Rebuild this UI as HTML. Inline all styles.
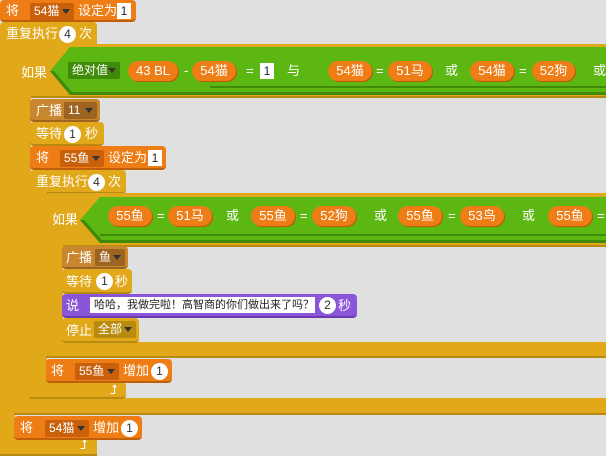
<!DOCTYPE html>
<html><head><meta charset="utf-8"><style>
body{margin:0;width:606px;height:456px;overflow:hidden;background:#e0e0e0;font-family:"Liberation Sans","Noto Sans CJK SC",sans-serif;font-size:13px;color:#fff;position:relative}
div,span{position:absolute;box-sizing:border-box}
.g{background:#e1a81a;border-bottom:2px solid #b88a10}
.o{background:#ee7d16;border-bottom:2px solid #c05f0a}
.b{background:#c8862e;border-bottom:2px solid #9c6420}
.p{background:#8a55d7;border-bottom:2px solid #6a3cb0}
.t{white-space:nowrap;line-height:14px}
.pill{background:#ee7d16;border-radius:11px;height:20px;line-height:20px;text-align:center;box-shadow:1px 1px 0 #b85c08;font-size:13px}
.num{background:#fff;color:#333;border-radius:9px;height:17px;width:17px;line-height:17px;text-align:center;font-size:12px}
.box{background:#fff;color:#222;height:16px;line-height:16px;text-align:center;font-size:12px}
.dd{border-radius:2px;height:17px;line-height:17px;padding-left:4px;font-size:12px}
.dd:after{content:"";position:absolute;right:4px;top:6px;border:4px solid transparent;border-top:5px solid #333;border-bottom:0}
</style></head><body>

<div class="g" style="left:0;top:22px;width:97px;height:24px;border-radius:4px"></div>
<div class="t" style="left:6px;top:27px">重复执行</div><div class="num" style="left:59px;top:26px">4</div><div class="t" style="left:79px;top:27px">次</div>
<div class="g" style="left:0;top:40px;width:15px;height:416px;border-bottom:0"></div>
<div class="g" style="left:0;top:438px;width:97px;height:18px;border-radius:0 4px 0 0"></div>
<div class="t" style="left:80px;top:438px;font-size:13px">⮥</div>

<div class="o" style="left:0;top:0;width:136px;height:22px;border-radius:4px"></div>
<div class="t" style="left:6px;top:4px">将</div>
<div class="dd" style="left:30px;top:3px;width:44px;background:#c8600c">54猫</div>
<div class="t" style="left:78px;top:4px">设定为</div><div class="box" style="left:117px;top:3px;width:14px">1</div>

<div class="g" style="left:14px;top:44px;width:592px;height:54px;border-radius:4px 0 0 0"></div>
<div class="g" style="left:14px;top:96px;width:17px;height:306px;border-bottom:0"></div>
<div class="g" style="left:14px;top:398px;width:592px;height:17px"></div>
<div class="t" style="left:21px;top:66px">如果</div>
<svg style="position:absolute;left:50px;top:47px" width="556" height="50"><polygon points="0,24 20,0 556,0 556,48 20,48" fill="#5cb712"/><polygon points="0,24 20,48 556,48 556,45 22,45 4,24" fill="#3f8a08"/><line x1="160" y1="40" x2="556" y2="40" stroke="#3f8a08" stroke-width="2"/></svg>
<div class="dd" style="left:68px;top:62px;width:52px;background:#3f8a08">绝对值</div>
<div class="pill" style="left:128px;top:61px;width:50px">43 BL</div>
<div class="t" style="left:184px;top:64px">-</div>
<div class="pill" style="left:192px;top:61px;width:44px">54猫</div>
<div class="t" style="left:246px;top:64px">=</div><div class="box" style="left:260px;top:63px;width:14px">1</div>
<div class="t" style="left:287px;top:64px">与</div>
<div class="pill" style="left:328px;top:61px;width:44px">54猫</div><div class="t" style="left:376px;top:64px">=</div>
<div class="pill" style="left:388px;top:61px;width:44px">51马</div><div class="t" style="left:445px;top:64px">或</div>
<div class="pill" style="left:470px;top:61px;width:44px">54猫</div><div class="t" style="left:519px;top:64px">=</div>
<div class="pill" style="left:532px;top:61px;width:43px">52狗</div><div class="t" style="left:593px;top:64px">或</div>

<div class="b" style="left:30px;top:99px;width:70px;height:23px;border-radius:4px"></div>
<div class="t" style="left:36px;top:104px">广播</div><div class="dd" style="left:64px;top:102px;width:33px;background:#9c6420">11</div>
<div class="g" style="left:30px;top:122px;width:74px;height:24px;border-radius:4px"></div>
<div class="t" style="left:36px;top:127px">等待</div><div class="num" style="left:64px;top:126px">1</div><div class="t" style="left:85px;top:127px">秒</div>
<div class="o" style="left:30px;top:146px;width:136px;height:24px;border-radius:4px"></div>
<div class="t" style="left:36px;top:151px">将</div>
<div class="dd" style="left:60px;top:150px;width:44px;background:#c8600c">55鱼</div>
<div class="t" style="left:108px;top:151px">设定为</div><div class="box" style="left:148px;top:150px;width:14px">1</div>

<div class="g" style="left:30px;top:170px;width:96px;height:24px;border-radius:4px"></div>
<div class="t" style="left:36px;top:175px">重复执行</div><div class="num" style="left:88px;top:174px">4</div><div class="t" style="left:108px;top:175px">次</div>
<div class="g" style="left:30px;top:190px;width:17px;height:210px;border-bottom:0"></div>
<div class="g" style="left:30px;top:382px;width:96px;height:17px;border-radius:0 4px 4px 0"></div>
<div class="t" style="left:110px;top:383px;font-size:13px">⮥</div>

<div class="g" style="left:46px;top:193px;width:560px;height:54px;border-radius:4px 0 0 0"></div>
<div class="g" style="left:46px;top:245px;width:17px;height:100px;border-bottom:0"></div>
<div class="g" style="left:46px;top:342px;width:560px;height:16px"></div>
<div class="t" style="left:52px;top:213px">如果</div>
<svg style="position:absolute;left:80px;top:197px" width="526" height="48"><polygon points="0,23 20,0 526,0 526,46 20,46" fill="#5cb712"/><polygon points="0,23 20,46 526,46 526,43 22,43 4,23" fill="#3f8a08"/><line x1="20" y1="38" x2="526" y2="38" stroke="#3f8a08" stroke-width="2"/></svg>
<div class="pill" style="left:108px;top:206px;width:44px">55鱼</div><div class="t" style="left:157px;top:209px">=</div>
<div class="pill" style="left:168px;top:206px;width:44px">51马</div><div class="t" style="left:226px;top:209px">或</div>
<div class="pill" style="left:251px;top:206px;width:44px">55鱼</div><div class="t" style="left:300px;top:209px">=</div>
<div class="pill" style="left:312px;top:206px;width:44px">52狗</div><div class="t" style="left:374px;top:209px">或</div>
<div class="pill" style="left:398px;top:206px;width:44px">55鱼</div><div class="t" style="left:448px;top:209px">=</div>
<div class="pill" style="left:460px;top:206px;width:44px">53鸟</div><div class="t" style="left:522px;top:209px">或</div>
<div class="pill" style="left:548px;top:206px;width:44px">55鱼</div><div class="t" style="left:597px;top:209px">=</div>

<div class="b" style="left:62px;top:246px;width:66px;height:23px;border-radius:4px"></div>
<div class="t" style="left:66px;top:251px">广播</div><div class="dd" style="left:95px;top:249px;width:30px;background:#9c6420">鱼</div>
<div class="g" style="left:62px;top:269px;width:70px;height:25px;border-radius:4px"></div>
<div class="t" style="left:66px;top:275px">等待</div><div class="num" style="left:96px;top:273px">1</div><div class="t" style="left:115px;top:275px">秒</div>
<div class="p" style="left:62px;top:294px;width:295px;height:24px;border-radius:4px"></div>
<div class="t" style="left:66px;top:299px">说</div>
<div class="box" style="left:90px;top:297px;width:225px;font-size:11px;text-align:left;padding-left:4px">哈哈，我做完啦！高智商的你们做出来了吗？</div>
<div class="num" style="left:319px;top:297px">2</div><div class="t" style="left:338px;top:299px">秒</div>
<div class="g" style="left:62px;top:318px;width:77px;height:25px;border-radius:4px"></div>
<div class="t" style="left:66px;top:324px">停止</div><div class="dd" style="left:94px;top:321px;width:42px;background:#b88a10">全部</div>

<div class="o" style="left:46px;top:359px;width:126px;height:24px;border-radius:4px"></div>
<div class="t" style="left:51px;top:364px">将</div>
<div class="dd" style="left:75px;top:363px;width:44px;background:#c8600c">55鱼</div>
<div class="t" style="left:123px;top:364px">增加</div><div class="num" style="left:151px;top:363px">1</div>

<div class="o" style="left:14px;top:416px;width:128px;height:24px;border-radius:4px"></div>
<div class="t" style="left:20px;top:421px">将</div>
<div class="dd" style="left:45px;top:420px;width:44px;background:#c8600c">54猫</div>
<div class="t" style="left:93px;top:421px">增加</div><div class="num" style="left:121px;top:420px">1</div>
</body></html>
